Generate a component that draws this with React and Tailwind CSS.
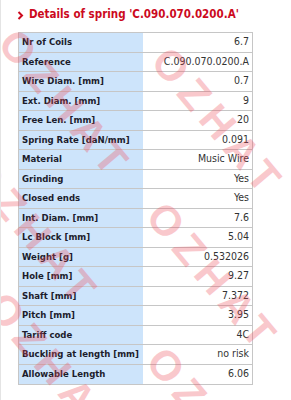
import React from "react";

const rows = [
  ["Nr of Coils", "6.7"],
  ["Reference", "C.090.070.0200.A"],
  ["Wire Diam. [mm]", "0.7"],
  ["Ext. Diam. [mm]", "9"],
  ["Free Len. [mm]", "20"],
  ["Spring Rate [daN/mm]", "0.091"],
  ["Material", "Music Wire"],
  ["Grinding", "Yes"],
  ["Closed ends", "Yes"],
  ["Int. Diam. [mm]", "7.6"],
  ["Lc Block [mm]", "5.04"],
  ["Weight [g]", "0.532026"],
  ["Hole [mm]", "9.27"],
  ["Shaft [mm]", "7.372"],
  ["Pitch [mm]", "3.95"],
  ["Tariff code", "4C"],
  ["Buckling at length [mm]", "no risk"],
  ["Allowable Length", "6.06"],
];

// watermark copies, laid over the table
const marks = [
  { x: 22, y: 22 },
  { x: 175, y: 40 },
  { x: -10, y: 150 },
  { x: 170, y: 195 },
  { x: 10, y: 285 },
  { x: 170, y: 340 },
];

const font = { fontFamily: '"DejaVu Sans Condensed", "DejaVu Sans", sans-serif' };

export default function App() {
  return (
    <div
      className="relative w-[291px] h-[400px] overflow-hidden bg-white border-l border-[#e4e4e4]"
      style={font}
    >
      <div className="flex items-center pl-[16px] pt-[6px] h-[24px] text-[#cc0a1e] font-bold text-[11.5px]">
        <svg width="7" height="9" viewBox="0 0 7 9" className="mr-[5px]">
          <path d="M1.5 1 L5 4.5 L1.5 8" stroke="#cc0a1e" strokeWidth="2" fill="none" />
        </svg>
        <span>Details of spring 'C.090.070.0200.A'</span>
      </div>

      <div className="ml-[17px] mt-[8px] w-[235px] border border-[#c6c6c6]">
        {rows.map(([label, value], i) => (
          <div
            key={i}
            className={`flex h-[19.5px] ${i < rows.length - 1 ? "border-b border-[#c6c6c6]" : ""}`}
          >
            <div className="w-[124px] shrink-0 bg-[#cde4fb] flex items-center pl-[3px] text-[9.5px] font-bold text-[#1c1c2c] whitespace-nowrap">
              {label}
            </div>
            <div className="flex-1 flex items-center justify-end pr-[3px] text-[10.5px] text-[#333] whitespace-nowrap">
              {value}
            </div>
          </div>
        ))}
      </div>

      {marks.map((m, i) => (
        <div
          key={i}
          className="absolute pointer-events-none text-[42px] font-black text-[#ee4b5a] opacity-30 tracking-[8px] origin-top-left rotate-[50deg] leading-none"
          style={{ left: m.x, top: m.y, fontFamily: '"Liberation Sans", sans-serif' }}
        >
          OZHAT
        </div>
      ))}
    </div>
  );
}
